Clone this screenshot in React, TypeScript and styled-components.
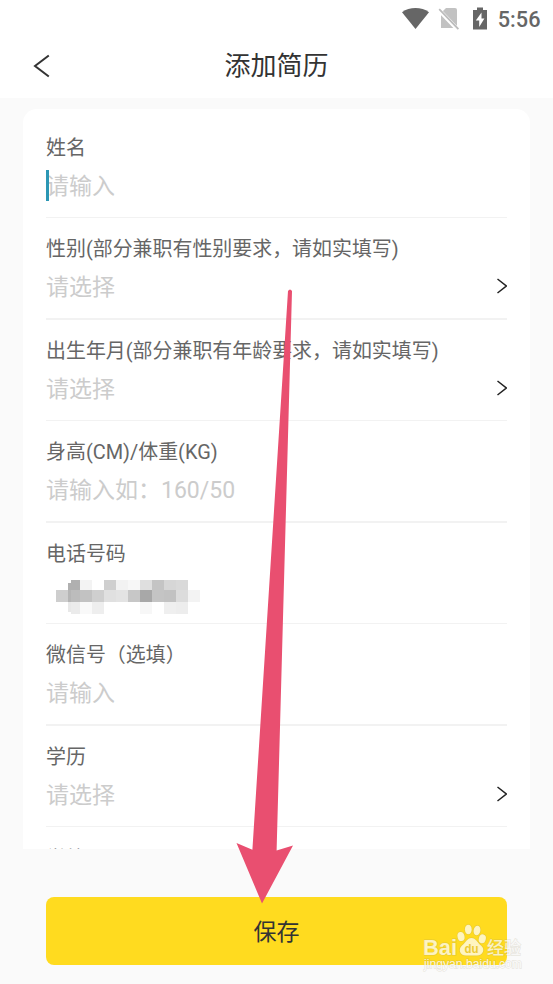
import React from "react";
import styled, { createGlobalStyle } from "styled-components";

const GlobalStyle = createGlobalStyle`
  * { box-sizing: border-box; }
  html, body { margin: 0; padding: 0; }
  body {
    background: #fafafa;
    font-family: Roboto, "Noto Sans CJK SC", sans-serif;
    overflow: hidden;
  }
`;

const Screen = styled.div`
  position: relative;
  display: flex;
  flex-direction: column;
  width: 553px;
  height: 984px;
  overflow: hidden;
  background: #fafafa;
`;

const Header = styled.header`
  flex: none;
  height: 98px;
  background: #fff;
`;

const StatusBar = styled.div`
  display: flex;
  justify-content: flex-end;
  align-items: center;
  height: 38px;
  padding-right: 12.5px;
`;

const Clock = styled.span`
  margin-left: 8.5px;
  padding-top: 1px;
  font-size: 21.7px;
  font-weight: 500;
  line-height: 38px;
  color: #666;
`;

const NavBar = styled.div`
  display: grid;
  grid-template-columns: 84px 1fr 84px;
  align-items: center;
  height: 56px;
`;

const BackButton = styled.button`
  display: flex;
  padding: 0 0 0 33px;
  border: 0;
  background: none;
`;

const Title = styled.h1`
  margin: 0;
  font-size: 26px;
  font-weight: 400;
  line-height: 56px;
  text-align: center;
  color: #333;
`;

const Card = styled.main`
  flex: none;
  height: 740px;
  margin: 11px 23px 0;
  padding: 8px 23px 0;
  overflow: hidden;
  border-radius: 14px 14px 0 0;
  background: #fff;
`;

const Field = styled.section`
  height: 101px;
  padding-top: 17px;
  border-bottom: 1px solid #f2f2f2;

  &:nth-child(even) {
    height: 102px;
    border-bottom-width: 2px;
  }

  &:last-child {
    padding-top: 18px;
  }
`;

const Label = styled.div`
  height: 28px;
  font-size: 19.95px;
  line-height: 28px;
  white-space: nowrap;
  color: #666;
`;

const Value = styled.div`
  position: relative;
  display: flex;
  align-items: center;
  justify-content: space-between;
  height: 40px;
  margin-top: 5px;
  font-size: 23px;
  line-height: 40px;
  color: #ccc;
`;

const Caret = styled.span`
  position: absolute;
  left: 0;
  top: 3px;
  width: 3px;
  height: 31px;
  background: #2c97b4;
`;

const Footer = styled.footer`
  padding: 48px 46px 0;
`;

const SaveButton = styled.button`
  display: block;
  width: 461px;
  height: 68px;
  padding: 3px 0 0;
  border: 0;
  border-radius: 8px;
  background: #ffdb1f;
  font-family: inherit;
  font-size: 23px;
  line-height: 65px;
  color: #333;
`;

const ArrowOverlay = styled.svg`
  position: absolute;
  left: 232px;
  top: 286px;
`;

const Watermark = styled.svg`
  position: absolute;
  left: 418px;
  top: 920px;
`;

const MosaicArt = styled.svg`
  display: block;
  margin: 8px 0 0 10px;
`;

const ChevronArt = styled.svg`
  display: block;
  margin-bottom: 4px;
`;

const StatusIcons = () => (
  <svg width="88" height="24" viewBox="401 7 88 24">
    <path d="M415.5 29 L402 12.2 C409.5 6.6 421.5 6.6 429 12.2 Z" fill="#666" />
    <path d="M446 8 H455 Q457 8 457 10 V28 H441 V13 Z" fill="#c2c2c2" />
    <path d="M438 9 L458 30" stroke="#fff" strokeWidth="4" />
    <path d="M439.2 9.2 L458.4 29.2" stroke="#bcbcbc" strokeWidth="1.8" />
    <path d="M473 10 H477 V7.5 H483 V10 H487 V29.5 H473 Z" fill="#666" />
    <path d="M481.5 12.5 L475.8 20.4 H479.2 V27 L484.4 18.6 H481.5 Z" fill="#fff" />
  </svg>
);

const BackIcon = () => (
  <svg width="17" height="24" viewBox="0 0 17 24" fill="none">
    <path d="M15.8 1.5 L2 12 L15.8 22.5" stroke="#333" strokeWidth="2" />
  </svg>
);

const Chevron = () => (
  <ChevronArt width="11" height="16" viewBox="0 0 11 16" fill="none">
    <path d="M1.5 1 L10.3 8 L1.5 15" stroke="#222" strokeWidth="1.5" />
  </ChevronArt>
);

// x, y, width, height, grey level
const blocks: [number, number, number, number, string][] = [
  [15, 0, 9, 10, "#b0b0b0"], [12, 3, 3, 7, "#b0b0b0"], [24, 0, 12, 10, "#f3f3f3"],
  [48, 0, 12, 10, "#cfcfcf"], [60, 0, 12, 10, "#f2f2f2"], [72, 0, 12, 10, "#f7f7f7"],
  [84, 0, 12, 10, "#dfdfdf"], [96, 0, 12, 10, "#c4c4c4"], [108, 0, 12, 10, "#d6d6d6"],
  [120, 0, 12, 10, "#d9d9d9"],
  [0, 10, 12, 12, "#cecece"], [12, 10, 3, 12, "#b5b5b5"], [15, 10, 9, 12, "#bcbcbc"],
  [24, 10, 12, 12, "#c2c2c2"], [36, 10, 12, 12, "#cfcfcf"], [48, 10, 12, 12, "#e0e0e0"],
  [60, 10, 12, 12, "#e3e3e3"], [72, 10, 12, 12, "#c7c7c7"], [84, 10, 12, 12, "#a8a8a8"],
  [96, 10, 12, 12, "#c4c4c4"], [108, 10, 12, 12, "#c2c2c2"], [120, 10, 12, 12, "#dcdcdc"],
  [132, 10, 12, 12, "#f3f3f3"],
  [12, 22, 3, 10, "#e8e8e8"], [15, 22, 9, 12, "#ebebeb"], [24, 22, 12, 12, "#f9f9f9"],
  [36, 22, 12, 12, "#eeeeee"], [84, 22, 12, 12, "#f7f7f7"], [108, 22, 12, 12, "#efefef"],
  [120, 22, 12, 12, "#ededed"],
];

const Mosaic = () => (
  <MosaicArt width="144" height="34" shapeRendering="crispEdges">
    {blocks.map(([x, y, w, h, fill]) => (
      <rect key={`${x}-${y}`} x={x} y={y} width={w} height={h} fill={fill} />
    ))}
  </MosaicArt>
);

type FieldData = {
  label: string;
  hint?: string;
  kind?: "select" | "focused" | "masked";
};

const fields: FieldData[] = [
  { label: "姓名", hint: "请输入", kind: "focused" },
  { label: "性别(部分兼职有性别要求，请如实填写)", hint: "请选择", kind: "select" },
  { label: "出生年月(部分兼职有年龄要求，请如实填写)", hint: "请选择", kind: "select" },
  { label: "身高(CM)/体重(KG)", hint: "请输入如：160/50" },
  { label: "电话号码", kind: "masked" },
  { label: "微信号（选填）", hint: "请输入" },
  { label: "学历", hint: "请选择", kind: "select" },
  { label: "学校" },
];

export default function App() {
  return (
    <>
      <GlobalStyle />
      <Screen>
        <Header>
          <StatusBar>
            <StatusIcons />
            <Clock>5:56</Clock>
          </StatusBar>
          <NavBar>
            <BackButton aria-label="返回">
              <BackIcon />
            </BackButton>
            <Title>添加简历</Title>
          </NavBar>
        </Header>
        <Card>
          {fields.map(({ label, hint, kind }) => (
            <Field key={label}>
              <Label>{label}</Label>
              <Value>
                {kind === "masked" && <Mosaic />}
                {hint && <span>{hint}</span>}
                {kind === "focused" && <Caret />}
                {kind === "select" && <Chevron />}
              </Value>
            </Field>
          ))}
        </Card>
        <Footer>
          <SaveButton>保存</SaveButton>
        </Footer>
        <ArrowOverlay width="64" height="620" viewBox="232 286 64 620">
          <path
            d="M288 291 Q290 288 292 291 L276.6 850.5 L293 845.6 L262 903.5 L236.5 843 L252.4 849.7 Z"
            fill="#e94f70"
          />
        </ArrowOverlay>
        <Watermark width="112" height="56" viewBox="418 920 112 56">
          <g
            fill="#fff"
            fillOpacity="0.72"
            stroke="#9b9470"
            strokeOpacity="0.2"
            strokeWidth="1.4"
            paintOrder="stroke"
          >
            <text x="423" y="955" fontFamily="Liberation Sans, sans-serif" fontSize="22" fontWeight="700" textLength="34" lengthAdjust="spacingAndGlyphs">Bai</text>
            <ellipse cx="461" cy="936.5" rx="3.5" ry="4.6" transform="rotate(-12 461 936.5)" />
            <ellipse cx="468.3" cy="929.5" rx="3.4" ry="4.8" />
            <ellipse cx="477" cy="930.5" rx="3.4" ry="4.8" transform="rotate(10 477 930.5)" />
            <ellipse cx="482.3" cy="938.8" rx="3.5" ry="4.5" transform="rotate(15 482.3 938.8)" />
            <path d="M471.5 938 C476 938 477.5 943 481 945.5 C485.5 949 483 955.5 477 955.5 H466 C459.5 955.5 458 949 462 945.5 C465.5 943 467 938 471.5 938 Z" />
            <text x="487" y="954" fontFamily="Noto Sans CJK SC, sans-serif" fontSize="17" fontWeight="500" textLength="34">经验</text>
            <text x="424" y="968" fontFamily="Liberation Sans, sans-serif" fontSize="12" fontWeight="400" textLength="98" lengthAdjust="spacingAndGlyphs" fillOpacity="0.85">jingyan.baidu.com</text>
          </g>
          <text x="464.5" y="953" fontFamily="Liberation Sans, sans-serif" fontSize="13.5" fontWeight="700" fill="#ecca35" textLength="14" lengthAdjust="spacingAndGlyphs">du</text>
        </Watermark>
      </Screen>
    </>
  );
}
